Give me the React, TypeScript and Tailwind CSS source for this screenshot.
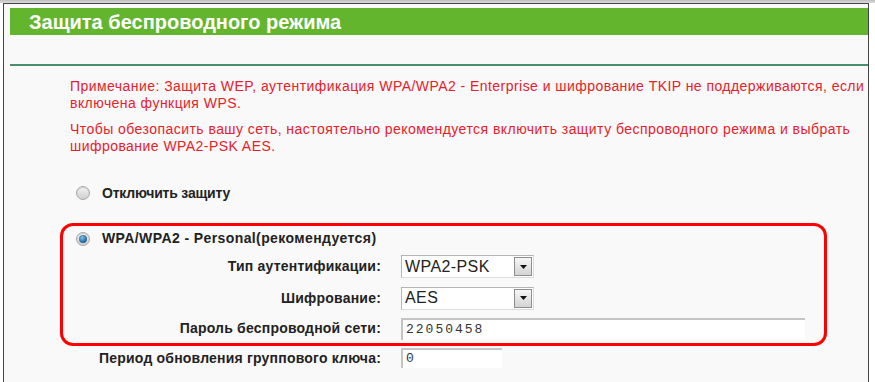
import React from "react";

function Radio({ checked }: { checked?: boolean }) {
  return (
    <span className="relative inline-flex h-[14px] w-[14px] shrink-0 items-center justify-center rounded-full border border-[#a8a8a8] bg-gradient-to-b from-[#f4f4f4] to-[#cfcfcf] shadow-[inset_0_1px_1px_rgba(0,0,0,0.15)]">
      {checked ? (
        <span className="h-[8px] w-[8px] rounded-full bg-[radial-gradient(circle_at_40%_35%,#7cc0e8,#1f5f8f_70%)]" />
      ) : null}
    </span>
  );
}

function Select({ value }: { value: string }) {
  return (
    <div className="flex h-[23px] w-[133px] items-center border border-[#b5b5b5] border-b-[#dcdcdc] border-r-[#dcdcdc] bg-white">
      <span className="flex-1 pl-[3px] text-[16px] leading-none tracking-[0.4px] text-[#222]">{value}</span>
      <span className="mr-[1px] flex h-[19px] w-[18px] items-center justify-center border border-[#8f8f8f] bg-gradient-to-b from-[#f6f6f6] to-[#d4d4d4]">
        <svg width="7" height="4" viewBox="0 0 7 4">
          <path d="M0 0h7L3.5 4z" fill="#111" />
        </svg>
      </span>
    </div>
  );
}

function TextInput({ value, w, h }: { value: string; w: string; h: string }) {
  return (
    <div className={`${w} ${h} flex items-center border-t-2 border-l-2 border-t-[#c4c4c4] border-l-[#c4c4c4] bg-white pl-[3px] font-['Liberation_Mono',monospace] text-[13px] tracking-[2px] text-[#333]`}>
      {value}
    </div>
  );
}

function Row({ label, labelW, h, children }: { label: string; labelW: string; h: string; children: React.ReactNode }) {
  return (
    <div className={`flex items-center ${h}`}>
      <div className={`${labelW} whitespace-nowrap text-right text-[14px] font-bold tracking-[0.2px] text-[#222]`}>{label}</div>
      <div className="ml-[20px]">{children}</div>
    </div>
  );
}

export default function App() {
  return (
    <div className="flex h-[382px] w-[875px] flex-col overflow-hidden bg-white font-['Liberation_Sans',Arial,sans-serif]">
      <div className="h-[3px] shrink-0 bg-gradient-to-b from-[#bdbdbd] to-[#dedede]" />
      <div className="ml-[3px] mr-[6px] flex-1 border-l border-r border-t border-[#444] bg-[#f9f9f9] pl-[6px] pt-[4px]">
        <div className="flex h-[27px] items-center bg-[#62b52d] pl-[19px] text-[20px] font-bold text-white">
          Защита беспроводного режима
        </div>
        <div className="h-[29px]" />
        <div className="h-[2px] bg-[#4a8f6c]" />
        <div className="mt-[12px] pl-[60px] text-[14px] leading-[17px] tracking-[0.45px] text-[#e8202a]">
          <p className="whitespace-nowrap">
            Примечание: Защита WEP, аутентификация WPA/WPA2 - Enterprise и шифрование TKIP не поддерживаются, если
            <br />
            включена функция WPS.
          </p>
          <p className="mt-[9px] whitespace-nowrap">
            Чтобы обезопасить вашу сеть, настоятельно рекомендуется включить защиту беспроводного режима и выбрать
            <br />
            шифрование WPA2-PSK AES.
          </p>
        </div>
        <div className="mt-[26px] flex h-[24px] items-center gap-[12px] pl-[66px]">
          <Radio />
          <span className="text-[14px] font-bold tracking-[-0.2px] text-[#222]">Отключить защиту</span>
        </div>
        <div className="ml-[50px] mt-[18px] w-[767px] rounded-[13px] border-[3px] border-[#ff0000]">
          <div className="flex h-[25px] items-center gap-[12px] pl-[13px]">
            <Radio checked />
            <span className="text-[14px] font-bold tracking-[0.4px] text-[#222]">WPA/WPA2 - Personal(рекомендуется)</span>
          </div>
          <Row label="Тип аутентификации:" labelW="w-[318px]" h="h-[31px]">
            <Select value="WPA2-PSK" />
          </Row>
          <Row label="Шифрование:" labelW="w-[318px]" h="h-[32px]">
            <Select value="AES" />
          </Row>
          <Row label="Пароль беспроводной сети:" labelW="w-[318px]" h="h-[29px]">
            <TextInput value="22050458" w="w-[404px]" h="h-[22px]" />
          </Row>
        </div>
        <div className="ml-[50px]">
          <Row label="Период обновления группового ключа:" labelW="w-[321px]" h="h-[24px]">
            <TextInput value="0" w="w-[101px]" h="h-[20px]" />
          </Row>
        </div>
      </div>
    </div>
  );
}
